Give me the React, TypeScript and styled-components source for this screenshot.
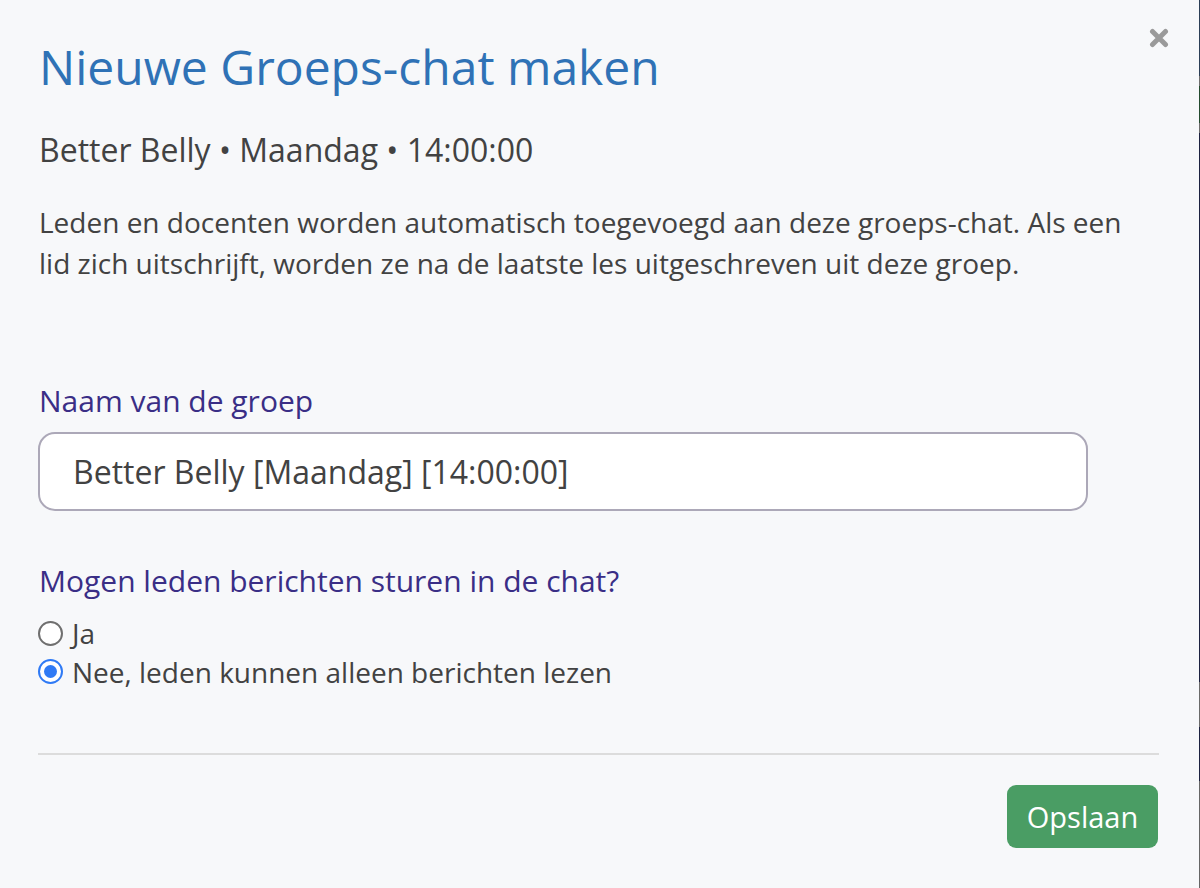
import styled, { createGlobalStyle } from "styled-components";

const GlobalStyle = createGlobalStyle`
  html, body {
    margin: 0;
    padding: 0;
    background: #1c2140;
  }
  * {
    box-sizing: border-box;
  }
`;

const Page = styled.div`
  display: flex;
  width: 1200px;
  height: 888px;
  overflow: hidden;
`;

const Backdrop = styled.div`
  width: 2px;
  flex-shrink: 0;
  background: linear-gradient(
    to bottom,
    #2b3e55 0px,
    #2b3e55 76px,
    #6e6e6e 76px,
    #6e6e6e 86px,
    #234a2e 86px,
    #234a2e 123px,
    #6c6c6c 123px,
    #6c6c6c 133px,
    #1c2140 133px,
    #1c2140 682px,
    #6a6a6a 682px,
    #6a6a6a 727px,
    #1c2140 727px,
    #1c2140 781px,
    #666666 781px
  );
`;

const Modal = styled.div`
  position: relative;
  flex: 1;
  background: #f7f8fa;
  padding: 37px 40px 0 39px;
  font-family: "Open Sans", "Noto Sans", sans-serif;
  color: #424242;
  display: flex;
  flex-direction: column;
`;

const Close = styled.button`
  position: absolute;
  top: 28px;
  right: 30px;
  width: 20px;
  height: 20px;
  padding: 0;
  border: none;
  background: none;
  cursor: pointer;
  display: flex;
  align-items: center;
  justify-content: center;
`;

const Title = styled.h1`
  margin: 0;
  font-size: 48px;
  font-weight: 400;
  line-height: 60px;
  color: #2f72b6;
`;

const Meta = styled.div`
  margin-top: 31px;
  font-size: 32px;
  line-height: 44px;
`;

const Intro = styled.p`
  margin: 30px 0 0;
  font-size: 28px;
  line-height: 41px;
  max-width: 1100px;
`;

const Field = styled.div`
  margin-top: 97px;
  display: flex;
  flex-direction: column;
`;

const Label = styled.label`
  font-size: 30px;
  line-height: 40px;
  color: #3a2e86;
`;

const Input = styled.input`
  margin-top: 11px;
  width: 1050px;
  height: 79px;
  margin-left: -1px;
  padding: 0 33px;
  border: 2px solid #aca8b8;
  border-radius: 17px;
  background: #fff;
  font-family: "Open Sans", "Noto Sans", sans-serif;
  font-size: 32px;
  color: #424242;
  outline: none;
`;

const Question = styled.div`
  margin-top: 50px;
  display: flex;
  flex-direction: column;
`;

const Options = styled.div`
  margin-top: 13px;
  display: flex;
  flex-direction: column;
`;

const Option = styled.label`
  display: flex;
  align-items: center;
  gap: 9px;
  font-size: 28px;
  line-height: 38.5px;
  color: #424242;
`;

const Radio = styled.span<{ checked?: boolean }>`
  width: 25px;
  height: 25px;
  margin-left: -1px;
  border-radius: 50%;
  flex-shrink: 0;
  background: #fff;
  border: ${(p) => (p.checked ? "2px solid #2f7af5" : "2px solid #6f6f6f")};
  display: flex;
  align-items: center;
  justify-content: center;
  &::after {
    content: "";
    display: ${(p) => (p.checked ? "block" : "none")};
    width: 13px;
    height: 13px;
    border-radius: 50%;
    background: #2f7af5;
  }
`;

const Divider = styled.hr`
  margin: 62px 0 0 -1px;
  width: 1121px;
  border: none;
  border-top: 2px solid #dcdcdc;
`;

const Footer = styled.div`
  margin-top: 30px;
  width: 1119px;
  display: flex;
  justify-content: flex-end;
`;

const SaveButton = styled.button`
  width: 151px;
  height: 63px;
  padding: 0;
  border: none;
  border-radius: 9px;
  background: #4a9d64;
  color: #fff;
  font-family: "Open Sans", "Noto Sans", sans-serif;
  font-size: 29px;
  cursor: pointer;
`;

function App() {
  return (
    <>
      <GlobalStyle />
      <Page>
        <Modal>
          <Close aria-label="Sluiten">
            <svg width="20" height="20" viewBox="0 0 20 20">
              <path
                d="M3.5 3.5 L16.5 16.5 M16.5 3.5 L3.5 16.5"
                stroke="#9a9a9a"
                strokeWidth="5"
                strokeLinecap="round"
              />
            </svg>
          </Close>
          <Title>Nieuwe Groeps-chat maken</Title>
          <Meta>Better Belly • Maandag • 14:00:00</Meta>
          <Intro>
            Leden en docenten worden automatisch toegevoegd aan deze groeps-chat. Als een
            lid zich uitschrijft, worden ze na de laatste les uitgeschreven uit deze groep.
          </Intro>
          <Field>
            <Label>Naam van de groep</Label>
            <Input defaultValue="Better Belly [Maandag] [14:00:00]" />
          </Field>
          <Question>
            <Label>Mogen leden berichten sturen in de chat?</Label>
            <Options>
              <Option>
                <Radio />
                Ja
              </Option>
              <Option>
                <Radio checked />
                Nee, leden kunnen alleen berichten lezen
              </Option>
            </Options>
          </Question>
          <Divider />
          <Footer>
            <SaveButton>Opslaan</SaveButton>
          </Footer>
        </Modal>
        <Backdrop />
      </Page>
    </>
  );
}

export default App;
